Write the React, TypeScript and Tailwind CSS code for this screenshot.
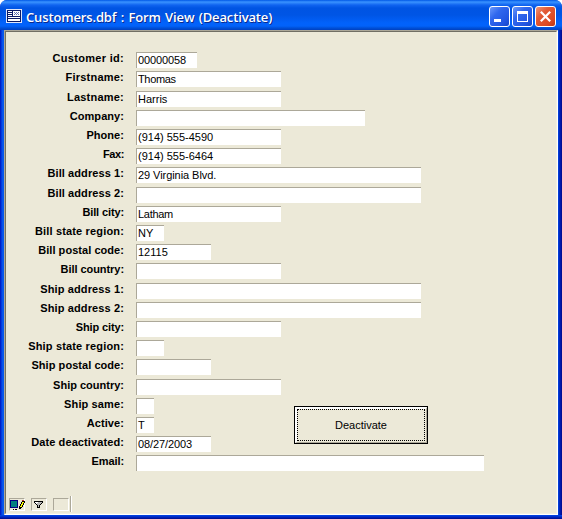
type Field = { label: string; value?: string; width: string; row?: string; spacing: string; valueSpacing?: string };

const fields: Field[] = [
  { label: "Customer id:", value: "00000058", width: "w-[61px]", spacing: "tracking-[0.3px]", valueSpacing: "tracking-[-0.1px]" },
  { label: "Firstname:", value: "Thomas", width: "w-[145px]", row: "h-5", spacing: "tracking-[0.22px]", valueSpacing: "tracking-[-0.35px]" },
  { label: "Lastname:", value: "Harris", width: "w-[145px]", spacing: "tracking-[0.22px]" },
  { label: "Company:", width: "w-[229px]", spacing: "tracking-[0.06px]" },
  { label: "Phone:", value: "(914) 555-4590", width: "w-[145px]", spacing: "tracking-[0.05px]" },
  { label: "Fax:", value: "(914) 555-6464", width: "w-[145px]", spacing: "tracking-[-0.4px]" },
  { label: "Bill address 1:", value: "29 Virginia Blvd.", width: "w-[285px]", row: "h-5", spacing: "tracking-[0.09px]", valueSpacing: "tracking-[-0.06px]" },
  { label: "Bill address 2:", width: "w-[285px]", spacing: "tracking-[0.09px]" },
  { label: "Bill city:", value: "Latham", width: "w-[145px]", spacing: "tracking-[-0.12px]", valueSpacing: "tracking-[-0.3px]" },
  { label: "Bill state region:", value: "NY", width: "w-[28px]", spacing: "tracking-[0.16px]" },
  { label: "Bill postal code:", value: "12115", width: "w-[75px]", spacing: "tracking-[0.05px]" },
  { label: "Bill country:", width: "w-[145px]", row: "h-5", spacing: "tracking-[-0.06px]" },
  { label: "Ship address 1:", width: "w-[285px]", spacing: "tracking-[0.12px]" },
  { label: "Ship address 2:", width: "w-[285px]", spacing: "tracking-[0.12px]" },
  { label: "Ship city:", width: "w-[145px]", spacing: "tracking-[-0.12px]" },
  { label: "Ship state region:", width: "w-[28px]", spacing: "tracking-[0.16px]" },
  { label: "Ship postal code:", width: "w-[75px]", row: "h-5", spacing: "tracking-[0.05px]" },
  { label: "Ship country:", width: "w-[145px]", spacing: "tracking-[0px]" },
  { label: "Ship same:", width: "w-[18px]", spacing: "tracking-[0.12px]" },
  { label: "Active:", value: "T", width: "w-[18px]", spacing: "tracking-[0.08px]" },
  { label: "Date deactivated:", value: "08/27/2003", width: "w-[75px]", spacing: "tracking-[0.1px]", valueSpacing: "tracking-[-0.1px]" },
  { label: "Email:", width: "w-[348px]", spacing: "tracking-[-0.1px]" },
];

function FieldRow({ label, value, width, row = "h-[19px]", spacing, valueSpacing = "tracking-[0px]" }: Field) {
  return (
    <div className={`flex items-start ${row}`}>
      <div className={`w-[118px] shrink-0 text-right text-[11px] leading-[13px] font-bold whitespace-nowrap ${spacing}`}>{label}</div>
      <div className={`ml-3 h-4 shrink-0 border-t border-l border-[#aca899] bg-white pl-px text-[11px] leading-[14px] whitespace-nowrap ${width} ${valueSpacing}`}>
        {value}
      </div>
    </div>
  );
}

function FormIcon() {
  return (
    <svg width="16" height="14" viewBox="0 0 16 14" shapeRendering="crispEdges">
      <rect width="16" height="14" fill="#0a1a66" />
      <path fillRule="evenodd" d="M0 0h16v14H0zM1 1v12h14V1z" fill="#dfe6fa" />
      <path d="M2 2h4v1H2zM2 4h4v1H2zM2 6h4v1H2zM2 8h12v1H2zM2 10h12v2H2zM7 2h7v5H7z" fill="#fff" />
      <path d="M8 3h1v1H8zM10 3h1v1h-1zM12 3h1v1h-1zM9 4h1v1H9zM11 4h1v1h-1zM8 5h1v1H8zM10 5h1v1h-1zM12 5h1v1h-1z" fill="#5a6cb0" />
    </svg>
  );
}

function TitleBar() {
  const button = "flex h-[21px] w-[21px] items-center justify-center rounded-[3px] border border-white";
  const blue = "bg-[linear-gradient(135deg,#6b98fa_0%,#3068ee_35%,#2256e2_75%,#1746c8_100%)]";
  return (
    <div className="flex h-[30px] shrink-0 items-start bg-[linear-gradient(180deg,#0058e6_0,#3a93ff_2px,#1064f0_5px,#0054e3_8px,#0055e5_15px,#0262fb_23px,#0262fa_26px,#0050d8_28px,#0040c0_30px)] pl-[6px]">
      <div className="mt-[9px]">
        <FormIcon />
      </div>
      <div className="mt-[8px] ml-1 font-['Open_Sans','Noto_Sans',sans-serif] text-[13px] leading-[18px] font-semibold tracking-[-0.14px] whitespace-nowrap text-white [text-shadow:1px_1px_0_#0b2a8c] [word-spacing:1.1px]">
        Customers.dbf : Form View (Deactivate)
      </div>
      <div className="mt-[6px] mr-[6px] ml-auto flex gap-[2px]">
        <div className={`${button} ${blue}`}>
          <svg width="19" height="19" shapeRendering="crispEdges"><rect x="4" y="12" width="7" height="3" fill="#fff" /></svg>
        </div>
        <div className={`${button} ${blue}`}>
          <svg width="19" height="19" shapeRendering="crispEdges"><path fillRule="evenodd" d="M4 4h11v11H4zM5 7v7h9V7z" fill="#fff" /></svg>
        </div>
        <div className={`${button} bg-[linear-gradient(135deg,#f09678_0%,#e25a35_35%,#dc4a22_75%,#b93613_100%)]`}>
          <svg width="19" height="19"><path d="M4.8 4.8L14.2 14.2M14.2 4.8L4.8 14.2" stroke="#fff" strokeWidth="2.2" /></svg>
        </div>
      </div>
    </div>
  );
}

function StatusBar() {
  const cell = "h-[13px] w-4 border-t border-l border-t-[#aca899] border-l-[#aca899] border-r border-b border-r-white border-b-white";
  return (
    <div className="flex h-[15px] items-start">
      <div className={`${cell} ml-[3px]`}>
        <svg width="15" height="11" viewBox="0 0 15 11" shapeRendering="crispEdges">
          <rect x="0" y="1" width="8" height="8" fill="#000080" />
          <rect x="1" y="2" width="6" height="6" fill="#008080" />
          <path d="M12 1h2v1h1v2h-1v2h-1v2h-1v1h-1v1H9V7h1V5h1V3h1z" fill="#000" />
          <path d="M12 3h2v1h-1v2h-1v2h-2V7h1V5h1z" fill="#ffff00" />
          <path d="M12 1h2v1h-2z" fill="#c03020" />
          <path d="M3 10h1v1H3zM5 10h2v1H5z" fill="#000" />
        </svg>
      </div>
      <div className={`${cell} ml-[6px]`}>
        <svg width="14" height="11" viewBox="0 0 14 11" shapeRendering="crispEdges">
          <path d="M2 2h9v2h-1v1H9v1H8v3H5V6H4V5H3V4H2z" fill="#000" />
          <path d="M3 3h7v1H9v1H8v1H7v2H6V6H5V5H4V4H3z" fill="#b8b8b8" />
          <path d="M3 3h3v1H5v1H4V4H3z" fill="#fff" />
        </svg>
      </div>
      <div className={`${cell} ml-[6px]`} />
      <div className="-mt-[2px] ml-[1px] h-4 w-[2px] border-r border-l border-r-white border-l-[#aca899]" />
    </div>
  );
}

export default function App() {
  return (
    <div className="h-[519px] w-[562px] bg-white">
      <div className="flex h-full flex-col overflow-hidden rounded-t-[7px] bg-[linear-gradient(90deg,#0010b8_0,#0030d8_1px,#0a5ef0_3px,#0048e0_5px,#0048e8_558px,#0030c8_559px,#0010a0_561px,#000c88_562px)] font-['Liberation_Sans',Arial,sans-serif] text-black">
        <TitleBar />
        <div className="mr-1 ml-1 flex min-h-0 flex-1 flex-col border-t border-r border-b border-l border-t-[#aca899] border-r-white border-b-white border-l-[#aca899] bg-[#ece9d8]">
          <div className="flex min-h-0 flex-1 flex-col border border-t-[#716f64] border-r-[#f1efe2] border-b-[#f1efe2] border-l-[#716f64]">
            <div className="flex min-h-0 flex-1 pt-5">
              <div className="w-0">
                {fields.map((f) => (
                  <FieldRow key={f.label} {...f} />
                ))}
              </div>
              <div className="mt-[354px] ml-[288px] h-[38px] w-[134px] border border-black bg-[#ece9d8]">
                <div className="h-full border-t-2 border-l-2 border-r border-b border-t-white border-l-white border-r-[#aca899] border-b-[#aca899] pr-px pb-px">
                  <div className="flex h-full items-center justify-center border border-dotted border-black text-[11px]">Deactivate</div>
                </div>
              </div>
            </div>
            <StatusBar />
          </div>
        </div>
        <div className="h-1 shrink-0 bg-[linear-gradient(180deg,#0048e8_0,#0038d8_1px,#0018a8_3px,#000c88_4px)]" />
      </div>
    </div>
  );
}
